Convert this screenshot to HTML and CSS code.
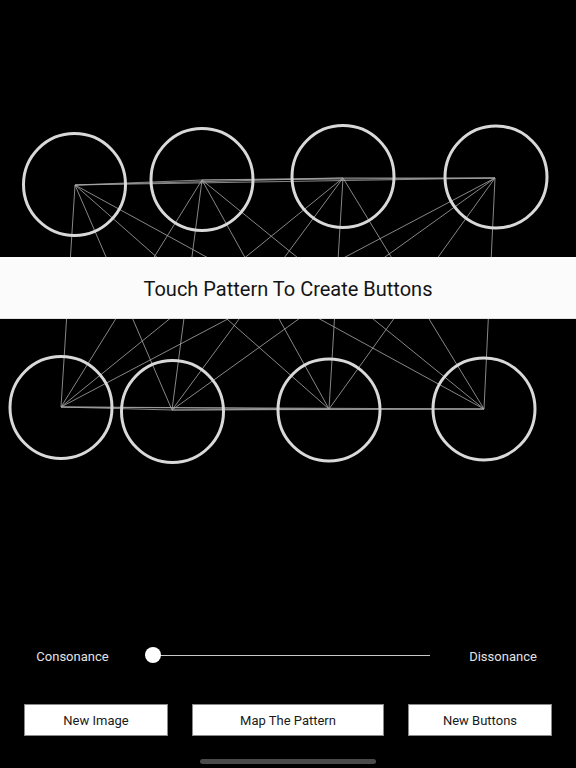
FILE: index.html
```html
<!DOCTYPE html>
<html lang="en">
<head>
<meta charset="utf-8">
<title>Pattern</title>
<link rel="stylesheet" href="styles.css">
</head>
<body>
<div class="app">
  <div class="stage">
    <svg class="pattern" width="576" height="630" viewBox="0 0 576 630" xmlns="http://www.w3.org/2000/svg">
      <g class="edges">
        <line x1="75" y1="185" x2="202" y2="180"/>
        <line x1="75" y1="185" x2="343" y2="178"/>
        <line x1="75" y1="185" x2="495" y2="178"/>
        <line x1="75" y1="185" x2="61" y2="407"/>
        <line x1="75" y1="185" x2="172" y2="410"/>
        <line x1="75" y1="185" x2="329" y2="409"/>
        <line x1="75" y1="185" x2="484" y2="409"/>
        <line x1="202" y1="180" x2="343" y2="178"/>
        <line x1="202" y1="180" x2="495" y2="178"/>
        <line x1="202" y1="180" x2="61" y2="407"/>
        <line x1="202" y1="180" x2="172" y2="410"/>
        <line x1="202" y1="180" x2="329" y2="409"/>
        <line x1="202" y1="180" x2="484" y2="409"/>
        <line x1="343" y1="178" x2="495" y2="178"/>
        <line x1="343" y1="178" x2="61" y2="407"/>
        <line x1="343" y1="178" x2="172" y2="410"/>
        <line x1="343" y1="178" x2="329" y2="409"/>
        <line x1="343" y1="178" x2="484" y2="409"/>
        <line x1="495" y1="178" x2="61" y2="407"/>
        <line x1="495" y1="178" x2="172" y2="410"/>
        <line x1="495" y1="178" x2="329" y2="409"/>
        <line x1="495" y1="178" x2="484" y2="409"/>
        <line x1="61" y1="407" x2="172" y2="410"/>
        <line x1="61" y1="407" x2="329" y2="409"/>
        <line x1="61" y1="407" x2="484" y2="409"/>
        <line x1="172" y1="410" x2="329" y2="409"/>
        <line x1="172" y1="410" x2="484" y2="409"/>
        <line x1="329" y1="409" x2="484" y2="409"/>
      </g>
      <g class="nodes">
        <circle cx="74.5" cy="184.5" r="51"/>
        <circle cx="202" cy="179.5" r="51"/>
        <circle cx="343" cy="176.5" r="51"/>
        <circle cx="496" cy="177" r="51"/>
        <circle cx="61" cy="407.5" r="51"/>
        <circle cx="172.5" cy="411.5" r="51"/>
        <circle cx="329" cy="410" r="51"/>
        <circle cx="484" cy="409" r="51"/>
      </g>
    </svg>
    <div class="banner">Touch Pattern To Create Buttons</div>
  </div>

  <div class="slider-row">
    <span class="slider-label">Consonance</span>
    <div class="slider">
      <div class="track"></div>
      <div class="thumb"></div>
    </div>
    <span class="slider-label">Dissonance</span>
  </div>

  <div class="button-row">
    <button class="btn btn-small">New Image</button>
    <button class="btn btn-wide">Map The Pattern</button>
    <button class="btn btn-small">New Buttons</button>
  </div>

  <div class="home-indicator"></div>
</div>
</body>
</html>
```

FILE: styles.css
```css
html, body {
  margin: 0;
  padding: 0;
  background: #000;
}

body {
  font-family: "Roboto", "Inter", "Liberation Sans", sans-serif;
  color: #e6e6e6;
}

.app {
  width: 576px;
  height: 768px;
  display: flex;
  flex-direction: column;
  overflow: hidden;
}

.stage {
  position: relative;
  height: 630px;
  flex: none;
}

.pattern {
  position: absolute;
  left: 0;
  top: 0;
}

.edges line {
  stroke: #a8a8a8;
  stroke-width: 0.8;
}

.nodes circle {
  fill: none;
  stroke: #d9d9d9;
  stroke-width: 3;
}

.banner {
  position: absolute;
  left: 0;
  right: 0;
  top: 257px;
  height: 62px;
  background: #fbfbfb;
  border-bottom: 1px solid #e2e2e2;
  box-sizing: border-box;
  display: flex;
  align-items: center;
  justify-content: center;
  padding-top: 2px;
  color: #141414;
  font-size: 20px;
}

.slider-row {
  height: 50px;
  display: grid;
  grid-template-columns: 145px 1fr 146px;
  align-items: center;
  flex: none;
}

.slider-label {
  text-align: center;
  font-size: 13px;
  color: #e4e4e4;
  padding-top: 2px;
}

.slider {
  position: relative;
  height: 16px;
  display: flex;
  align-items: center;
}

.track {
  height: 1px;
  width: 100%;
  background: #c8c8c8;
}

.thumb {
  position: absolute;
  left: 0;
  top: 0;
  width: 16px;
  height: 16px;
  border-radius: 50%;
  background: #fff;
}

.button-row {
  display: flex;
  gap: 24px;
  padding: 24px 24px 0;
  flex: none;
}

.btn {
  height: 32px;
  margin: 0;
  padding: 0;
  border: 1px solid #8a8a8a;
  background: #fff;
  color: #1a1a1a;
  font-family: inherit;
  font-size: 13px;
  border-radius: 0;
}

.btn-small {
  width: 144px;
}

.btn-wide {
  width: 192px;
}

.home-indicator {
  width: 176px;
  height: 5px;
  border-radius: 3px;
  background: #4a4a4a;
  margin: 23px auto 0;
  flex: none;
}
```
